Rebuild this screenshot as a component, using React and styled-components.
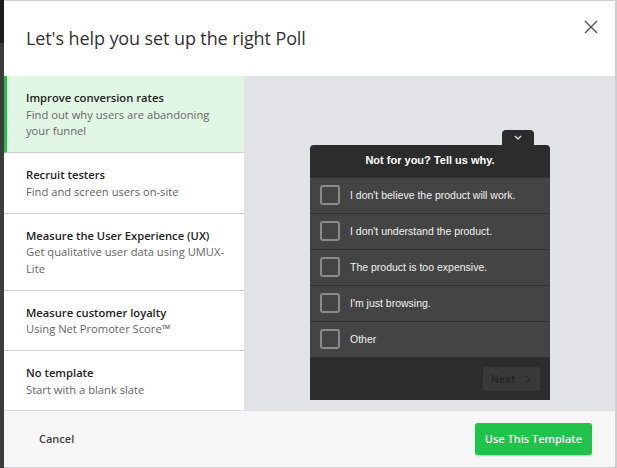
import styled, { createGlobalStyle } from "styled-components";

const templates = [
  {
    title: "Improve conversion rates",
    desc: "Find out why users are abandoning your funnel",
  },
  { title: "Recruit testers", desc: "Find and screen users on-site" },
  {
    title: "Measure the User Experience (UX)",
    desc: "Get qualitative user data using UMUX-Lite",
  },
  { title: "Measure customer loyalty", desc: "Using Net Promoter Score™" },
  { title: "No template", desc: "Start with a blank slate" },
];

const reasons = [
  "I don't believe the product will work.",
  "I don't understand the product.",
  "The product is too expensive.",
  "I'm just browsing.",
  "Other",
];

function App() {
  return (
    <>
      <GlobalStyle />
      <Page>
        <Modal>
          <Header>
            <Title>Let's help you set up the right Poll</Title>
            <Close aria-label="Close">
              <svg width="14" height="14" viewBox="0 0 14 14">
                <path
                  d="M1 1L13 13M13 1L1 13"
                  stroke="#555"
                  strokeWidth="1.4"
                  fill="none"
                />
              </svg>
            </Close>
          </Header>
          <Body>
            <Sidebar>
              {templates.map((t, i) => (
                <Item key={t.title} $active={i === 0}>
                  <ItemTitle>{t.title}</ItemTitle>
                  <ItemDesc>{t.desc}</ItemDesc>
                </Item>
              ))}
            </Sidebar>
            <Preview>
              <Widget>
                <Tab>
                  <svg width="8" height="5" viewBox="0 0 8 5">
                    <path
                      d="M1 1L4 4L7 1"
                      stroke="#ddd"
                      strokeWidth="1.4"
                      fill="none"
                    />
                  </svg>
                </Tab>
                <WidgetHead>Not for you? Tell us why.</WidgetHead>
                {reasons.map((r) => (
                  <Row key={r}>
                    <Check />
                    <RowText>{r}</RowText>
                  </Row>
                ))}
                <WidgetFoot>
                  <NextButton>
                    Next
                    <svg width="6" height="9" viewBox="0 0 6 9">
                      <path
                        d="M1 1L4.5 4.5L1 8"
                        stroke="#2a2a2a"
                        strokeWidth="1.5"
                        fill="none"
                      />
                    </svg>
                  </NextButton>
                </WidgetFoot>
              </Widget>
            </Preview>
          </Body>
          <Footer>
            <Cancel>Cancel</Cancel>
            <UseButton>Use This Template</UseButton>
          </Footer>
        </Modal>
      </Page>
    </>
  );
}

export default App;

const GlobalStyle = createGlobalStyle`
  * { box-sizing: border-box; }
  html, body { margin: 0; padding: 0; }
  body {
    background: linear-gradient(#1c1c1c 0 43px, #3c3c3c 43px);
    font-family: "Open Sans", "Liberation Sans", sans-serif;
  }
`;

const Page = styled.div`
  display: flex;
  width: 617px;
  height: 468px;
  padding-left: 4px;
`;

const Modal = styled.div`
  display: flex;
  flex-direction: column;
  flex: 1;
  background: #fff;
  border: 1px solid #cfcfd2;
  border-left: none;
  border-right-width: 2px;
`;

const Header = styled.div`
  display: flex;
  align-items: center;
  justify-content: space-between;
  height: 75px;
  padding: 0 17px 2px 22px;
`;

const Title = styled.h1`
  margin: 0;
  font-size: 18px;
  font-weight: 400;
  color: #333;
  letter-spacing: -0.1px;
`;

const Close = styled.button`
  display: flex;
  align-self: flex-start;
  margin-top: 19px;
  padding: 0;
  border: none;
  background: none;
`;

const Body = styled.div`
  display: flex;
  height: 334px;
`;

const Sidebar = styled.div`
  display: flex;
  flex-direction: column;
  width: 240px;
  background: #fff;
`;

const Item = styled.div`
  display: flex;
  flex-direction: column;
  padding: 14px 10px 12.5px ${(p) => (p.$active ? "19px" : "22px")};
  border-bottom: 1px solid #cfcfcf;
  border-left: ${(p) => (p.$active ? "3px solid #1fc24a" : "none")};
  background: ${(p) => (p.$active ? "#e2f6e5" : "#fff")};
`;

const ItemTitle = styled.div`
  font-size: 11.2px;
  font-weight: 600;
  color: #222;
  line-height: 16.5px;
`;

const ItemDesc = styled.div`
  font-size: 11.2px;
  color: #666;
  line-height: 16.5px;
`;

const Preview = styled.div`
  display: flex;
  flex: 1;
  justify-content: center;
  align-items: flex-end;
  background: #e2e3e7;
  padding: 0 65px 10px 66px;
`;

const Widget = styled.div`
  position: relative;
  display: flex;
  flex-direction: column;
  width: 240px;
  background: #2c2c2c;
  border-radius: 4px 4px 0 0;
  font-family: "Liberation Sans", Arial, sans-serif;
`;

const Tab = styled.div`
  position: absolute;
  top: -15px;
  right: 16px;
  width: 32px;
  height: 16px;
  display: flex;
  justify-content: center;
  padding-top: 5px;
  background: #2c2c2c;
  border-radius: 4px 4px 0 0;
`;

const WidgetHead = styled.div`
  height: 32px;
  display: flex;
  align-items: center;
  justify-content: center;
  padding-bottom: 2px;
  color: #fff;
  font-size: 11px;
  font-weight: 700;
`;

const Row = styled.div`
  display: flex;
  align-items: center;
  height: 36px;
  padding: 0 0 2px 10px;
  background: #444;
  border-top: 1px solid #333;
`;

const Check = styled.span`
  width: 20px;
  height: 20px;
  border: 2px solid #8a8a8a;
  border-radius: 3px;
  margin-right: 10px;
`;

const RowText = styled.span`
  color: #f2f2f2;
  font-size: 10.5px;
`;

const WidgetFoot = styled.div`
  display: flex;
  justify-content: flex-end;
  align-items: center;
  height: 43px;
  padding-right: 10px;
  border-top: 1px solid #333;
`;

const NextButton = styled.div`
  display: flex;
  align-items: center;
  gap: 10px;
  width: 57px;
  height: 24px;
  padding-left: 8px;
  background: #393939;
  border-radius: 3px;
  color: #262626;
  font-size: 11px;
  font-weight: 700;
`;

const Footer = styled.div`
  display: flex;
  align-items: center;
  justify-content: space-between;
  flex: 1;
  padding: 0 23px 1px 35px;
  background: #f6f6f6;
  border-top: 1px solid #ddd;
`;

const Cancel = styled.span`
  font-size: 11px;
  font-weight: 600;
  color: #444;
`;

const UseButton = styled.button`
  height: 32px;
  padding: 0 10px;
  border: none;
  border-radius: 3px;
  background: #1fc24a;
  color: #fff;
  font-family: "Open Sans", sans-serif;
  font-size: 11px;
  font-weight: 600;
  box-shadow: 0 1px 2px rgba(0, 0, 0, 0.2);
`;
